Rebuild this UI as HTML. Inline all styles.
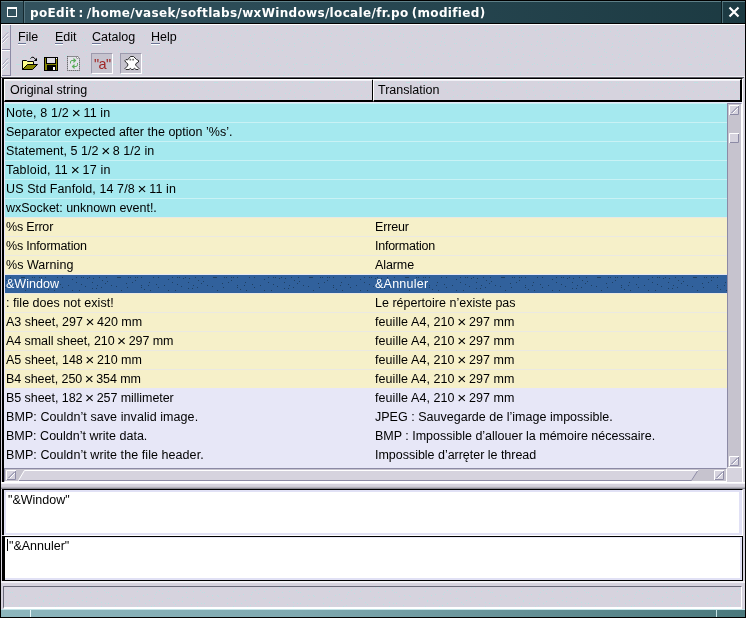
<!DOCTYPE html>
<html><head><meta charset="utf-8"><title>poEdit</title>
<style>
html,body{margin:0;padding:0;}
body{width:746px;height:618px;position:relative;overflow:hidden;background:#d6d3de;font-family:"Liberation Sans",sans-serif;font-size:12.5px;color:#000;}
div,span{position:absolute;box-sizing:border-box;white-space:nowrap;}
#frame{left:0;top:0;width:746px;height:618px;border:1px solid #000;}
#title{left:1px;top:1px;width:744px;height:22px;background:linear-gradient(90deg,#34535f 0%,#2a4a55 40%,#1c3a42 100%);border-top:1px solid #5f8088;}
#tline{left:0;top:23px;width:746px;height:1px;background:#000;}
#ttext{left:30px;top:5px;color:#fff;font:bold 12px "DejaVu Sans","Liberation Sans",sans-serif;line-height:16px;letter-spacing:0.33px;word-spacing:-1.4px;}
.menu{top:29px;font-size:12.5px;line-height:16px;}
.menu u{text-decoration:none;display:inline-block;position:static;height:14px;border-bottom:1px solid #6b7394;box-shadow:0 1px 0 #fff;}
.row{left:5px;width:722px;height:19px;border-top:1px solid #eef;}
.row span{top:2px;line-height:14px;}
.row .o{left:1px;}
.row .t{left:370px;}
.x{font-weight:normal;font-size:15.500px;line-height:0;margin:0 -0.900px;position:relative;top:0.500px;letter-spacing:0}
.c{background:#a5e9ef;border-top-color:#c9f2f5;}
.y{background:#f6f0c9;border-top-color:#ebe9e2;}
.l{background:#e7e7f7;border-top-color:#e7e7f7;}
.s{background:#31619c;color:#fff;border-top-color:#e8e8f0;}
.st{color:#fff;border-top-color:transparent;}
.hdr{top:79px;height:23px;background:#d6d3de;box-shadow:inset 0 1px 0 #f0eff5;border-top:1px solid #fff;border-left:1px solid #fff;border-bottom:2px solid #000;border-right:2px solid #000;}
.ht{top:83px;line-height:14px;}
.tb{top:53px;width:22px;height:21px;background:#c6c3ce;border:1px solid #9c9aad;border-right-color:#fff;border-bottom-color:#fff;}
</style></head><body><div id="wrap" style="left:0;top:0;width:746px;height:618px;will-change:transform">
<svg style="position:absolute;left:0;top:0" width="746" height="618"><defs>
<pattern id="dots" width="96" height="64" patternUnits="userSpaceOnUse"><g fill="#bde0e2"><rect x="0" y="10" width="1" height="1"/><rect x="0" y="45" width="1" height="1"/><rect x="1" y="3" width="1" height="1"/><rect x="1" y="15" width="1" height="1"/><rect x="1" y="22" width="1" height="1"/><rect x="1" y="43" width="1" height="1"/><rect x="2" y="58" width="1" height="1"/><rect x="4" y="6" width="1" height="1"/><rect x="4" y="36" width="1" height="1"/><rect x="5" y="0" width="1" height="1"/><rect x="5" y="26" width="1" height="1"/><rect x="5" y="30" width="1" height="1"/><rect x="6" y="4" width="1" height="1"/><rect x="6" y="43" width="1" height="1"/><rect x="6" y="46" width="1" height="1"/><rect x="6" y="58" width="1" height="1"/><rect x="7" y="31" width="1" height="1"/><rect x="7" y="51" width="1" height="1"/><rect x="8" y="14" width="1" height="1"/><rect x="8" y="63" width="1" height="1"/><rect x="9" y="27" width="1" height="1"/><rect x="10" y="8" width="1" height="1"/><rect x="10" y="16" width="1" height="1"/><rect x="10" y="39" width="1" height="1"/><rect x="12" y="16" width="1" height="1"/><rect x="12" y="27" width="1" height="1"/><rect x="12" y="41" width="1" height="1"/><rect x="13" y="48" width="1" height="1"/><rect x="15" y="9" width="1" height="1"/><rect x="15" y="20" width="1" height="1"/><rect x="15" y="36" width="1" height="1"/><rect x="16" y="0" width="1" height="1"/><rect x="16" y="33" width="1" height="1"/><rect x="17" y="0" width="1" height="1"/><rect x="17" y="57" width="1" height="1"/><rect x="18" y="0" width="1" height="1"/><rect x="19" y="0" width="1" height="1"/><rect x="19" y="29" width="1" height="1"/><rect x="19" y="34" width="1" height="1"/><rect x="19" y="36" width="1" height="1"/><rect x="19" y="42" width="1" height="1"/><rect x="20" y="13" width="1" height="1"/><rect x="20" y="19" width="1" height="1"/><rect x="21" y="23" width="1" height="1"/><rect x="22" y="51" width="1" height="1"/><rect x="23" y="47" width="1" height="1"/><rect x="23" y="57" width="1" height="1"/><rect x="25" y="6" width="1" height="1"/><rect x="25" y="19" width="1" height="1"/><rect x="25" y="42" width="1" height="1"/><rect x="25" y="56" width="1" height="1"/><rect x="26" y="10" width="1" height="1"/><rect x="26" y="20" width="1" height="1"/><rect x="27" y="0" width="1" height="1"/><rect x="27" y="32" width="1" height="1"/><rect x="28" y="35" width="1" height="1"/><rect x="28" y="49" width="1" height="1"/><rect x="28" y="51" width="1" height="1"/><rect x="29" y="0" width="1" height="1"/><rect x="30" y="52" width="1" height="1"/><rect x="30" y="57" width="1" height="1"/><rect x="31" y="5" width="1" height="1"/><rect x="31" y="43" width="1" height="1"/><rect x="32" y="39" width="1" height="1"/><rect x="34" y="0" width="1" height="1"/><rect x="34" y="3" width="1" height="1"/><rect x="34" y="31" width="1" height="1"/><rect x="35" y="22" width="1" height="1"/><rect x="35" y="27" width="1" height="1"/><rect x="35" y="47" width="1" height="1"/><rect x="36" y="0" width="1" height="1"/><rect x="36" y="43" width="1" height="1"/><rect x="36" y="46" width="1" height="1"/><rect x="36" y="54" width="1" height="1"/><rect x="38" y="59" width="1" height="1"/><rect x="39" y="21" width="1" height="1"/><rect x="39" y="35" width="1" height="1"/><rect x="40" y="0" width="1" height="1"/><rect x="40" y="8" width="1" height="1"/><rect x="40" y="10" width="1" height="1"/><rect x="41" y="15" width="1" height="1"/><rect x="41" y="30" width="1" height="1"/><rect x="42" y="36" width="1" height="1"/><rect x="42" y="47" width="1" height="1"/><rect x="42" y="57" width="1" height="1"/><rect x="43" y="12" width="1" height="1"/><rect x="43" y="24" width="1" height="1"/><rect x="43" y="25" width="1" height="1"/><rect x="43" y="33" width="1" height="1"/><rect x="43" y="41" width="1" height="1"/><rect x="43" y="54" width="1" height="1"/><rect x="47" y="8" width="1" height="1"/><rect x="47" y="19" width="1" height="1"/><rect x="47" y="61" width="1" height="1"/><rect x="48" y="5" width="1" height="1"/><rect x="48" y="35" width="1" height="1"/><rect x="48" y="61" width="1" height="1"/><rect x="49" y="13" width="1" height="1"/><rect x="49" y="27" width="1" height="1"/><rect x="49" y="55" width="1" height="1"/><rect x="51" y="18" width="1" height="1"/><rect x="51" y="44" width="1" height="1"/><rect x="51" y="50" width="1" height="1"/><rect x="52" y="0" width="1" height="1"/><rect x="53" y="24" width="1" height="1"/><rect x="54" y="58" width="1" height="1"/><rect x="54" y="63" width="1" height="1"/><rect x="55" y="7" width="1" height="1"/><rect x="55" y="30" width="1" height="1"/><rect x="56" y="45" width="1" height="1"/><rect x="57" y="0" width="1" height="1"/><rect x="57" y="10" width="1" height="1"/><rect x="57" y="41" width="1" height="1"/><rect x="58" y="22" width="1" height="1"/><rect x="58" y="29" width="1" height="1"/><rect x="58" y="35" width="1" height="1"/><rect x="59" y="18" width="1" height="1"/><rect x="59" y="53" width="1" height="1"/><rect x="60" y="16" width="1" height="1"/><rect x="60" y="38" width="1" height="1"/><rect x="60" y="42" width="1" height="1"/><rect x="61" y="45" width="1" height="1"/><rect x="62" y="34" width="1" height="1"/><rect x="63" y="8" width="1" height="1"/><rect x="63" y="14" width="1" height="1"/><rect x="63" y="27" width="1" height="1"/><rect x="64" y="53" width="1" height="1"/><rect x="64" y="60" width="1" height="1"/><rect x="65" y="56" width="1" height="1"/><rect x="66" y="17" width="1" height="1"/><rect x="66" y="25" width="1" height="1"/><rect x="66" y="48" width="1" height="1"/><rect x="66" y="55" width="1" height="1"/><rect x="67" y="2" width="1" height="1"/><rect x="67" y="13" width="1" height="1"/><rect x="70" y="32" width="1" height="1"/><rect x="70" y="39" width="1" height="1"/><rect x="70" y="43" width="1" height="1"/><rect x="71" y="0" width="1" height="1"/><rect x="71" y="5" width="1" height="1"/><rect x="71" y="22" width="1" height="1"/><rect x="72" y="15" width="1" height="1"/><rect x="72" y="43" width="1" height="1"/><rect x="72" y="56" width="1" height="1"/><rect x="73" y="22" width="1" height="1"/><rect x="73" y="51" width="1" height="1"/><rect x="74" y="13" width="1" height="1"/><rect x="75" y="31" width="1" height="1"/><rect x="75" y="62" width="1" height="1"/><rect x="76" y="0" width="1" height="1"/><rect x="76" y="7" width="1" height="1"/><rect x="76" y="48" width="1" height="1"/><rect x="77" y="26" width="1" height="1"/><rect x="77" y="37" width="1" height="1"/><rect x="78" y="0" width="1" height="1"/><rect x="78" y="58" width="1" height="1"/><rect x="79" y="28" width="1" height="1"/><rect x="80" y="9" width="1" height="1"/><rect x="82" y="1" width="1" height="1"/><rect x="82" y="15" width="1" height="1"/><rect x="82" y="24" width="1" height="1"/><rect x="82" y="38" width="1" height="1"/><rect x="82" y="42" width="1" height="1"/><rect x="83" y="32" width="1" height="1"/><rect x="83" y="51" width="1" height="1"/><rect x="84" y="0" width="1" height="1"/><rect x="84" y="40" width="1" height="1"/><rect x="85" y="39" width="1" height="1"/><rect x="85" y="45" width="1" height="1"/><rect x="86" y="21" width="1" height="1"/><rect x="86" y="25" width="1" height="1"/><rect x="86" y="50" width="1" height="1"/><rect x="86" y="56" width="1" height="1"/><rect x="87" y="5" width="1" height="1"/><rect x="87" y="11" width="1" height="1"/><rect x="88" y="1" width="1" height="1"/><rect x="89" y="34" width="1" height="1"/><rect x="90" y="16" width="1" height="1"/><rect x="90" y="50" width="1" height="1"/><rect x="91" y="11" width="1" height="1"/><rect x="91" y="21" width="1" height="1"/><rect x="91" y="45" width="1" height="1"/><rect x="92" y="8" width="1" height="1"/><rect x="92" y="39" width="1" height="1"/><rect x="94" y="0" width="1" height="1"/><rect x="94" y="33" width="1" height="1"/><rect x="94" y="56" width="1" height="1"/><rect x="95" y="28" width="1" height="1"/><rect x="95" y="63" width="1" height="1"/></g></pattern>
<pattern id="ddots" width="96" height="64" patternUnits="userSpaceOnUse"><g fill="#1d3f63"><rect x="0" y="10" width="1" height="1"/><rect x="0" y="45" width="1" height="1"/><rect x="1" y="3" width="1" height="1"/><rect x="1" y="15" width="1" height="1"/><rect x="1" y="22" width="1" height="1"/><rect x="1" y="43" width="1" height="1"/><rect x="2" y="58" width="1" height="1"/><rect x="4" y="6" width="1" height="1"/><rect x="4" y="36" width="1" height="1"/><rect x="5" y="0" width="1" height="1"/><rect x="5" y="26" width="1" height="1"/><rect x="5" y="30" width="1" height="1"/><rect x="6" y="4" width="1" height="1"/><rect x="6" y="43" width="1" height="1"/><rect x="6" y="46" width="1" height="1"/><rect x="6" y="58" width="1" height="1"/><rect x="7" y="31" width="1" height="1"/><rect x="7" y="51" width="1" height="1"/><rect x="8" y="14" width="1" height="1"/><rect x="8" y="63" width="1" height="1"/><rect x="9" y="27" width="1" height="1"/><rect x="10" y="8" width="1" height="1"/><rect x="10" y="16" width="1" height="1"/><rect x="10" y="39" width="1" height="1"/><rect x="12" y="16" width="1" height="1"/><rect x="12" y="27" width="1" height="1"/><rect x="12" y="41" width="1" height="1"/><rect x="13" y="48" width="1" height="1"/><rect x="15" y="9" width="1" height="1"/><rect x="15" y="20" width="1" height="1"/><rect x="15" y="36" width="1" height="1"/><rect x="16" y="0" width="1" height="1"/><rect x="16" y="33" width="1" height="1"/><rect x="17" y="0" width="1" height="1"/><rect x="17" y="57" width="1" height="1"/><rect x="18" y="0" width="1" height="1"/><rect x="19" y="0" width="1" height="1"/><rect x="19" y="29" width="1" height="1"/><rect x="19" y="34" width="1" height="1"/><rect x="19" y="36" width="1" height="1"/><rect x="19" y="42" width="1" height="1"/><rect x="20" y="13" width="1" height="1"/><rect x="20" y="19" width="1" height="1"/><rect x="21" y="23" width="1" height="1"/><rect x="22" y="51" width="1" height="1"/><rect x="23" y="47" width="1" height="1"/><rect x="23" y="57" width="1" height="1"/><rect x="25" y="6" width="1" height="1"/><rect x="25" y="19" width="1" height="1"/><rect x="25" y="42" width="1" height="1"/><rect x="25" y="56" width="1" height="1"/><rect x="26" y="10" width="1" height="1"/><rect x="26" y="20" width="1" height="1"/><rect x="27" y="0" width="1" height="1"/><rect x="27" y="32" width="1" height="1"/><rect x="28" y="35" width="1" height="1"/><rect x="28" y="49" width="1" height="1"/><rect x="28" y="51" width="1" height="1"/><rect x="29" y="0" width="1" height="1"/><rect x="30" y="52" width="1" height="1"/><rect x="30" y="57" width="1" height="1"/><rect x="31" y="5" width="1" height="1"/><rect x="31" y="43" width="1" height="1"/><rect x="32" y="39" width="1" height="1"/><rect x="34" y="0" width="1" height="1"/><rect x="34" y="3" width="1" height="1"/><rect x="34" y="31" width="1" height="1"/><rect x="35" y="22" width="1" height="1"/><rect x="35" y="27" width="1" height="1"/><rect x="35" y="47" width="1" height="1"/><rect x="36" y="0" width="1" height="1"/><rect x="36" y="43" width="1" height="1"/><rect x="36" y="46" width="1" height="1"/><rect x="36" y="54" width="1" height="1"/><rect x="38" y="59" width="1" height="1"/><rect x="39" y="21" width="1" height="1"/><rect x="39" y="35" width="1" height="1"/><rect x="40" y="0" width="1" height="1"/><rect x="40" y="8" width="1" height="1"/><rect x="40" y="10" width="1" height="1"/><rect x="41" y="15" width="1" height="1"/><rect x="41" y="30" width="1" height="1"/><rect x="42" y="36" width="1" height="1"/><rect x="42" y="47" width="1" height="1"/><rect x="42" y="57" width="1" height="1"/><rect x="43" y="12" width="1" height="1"/><rect x="43" y="24" width="1" height="1"/><rect x="43" y="25" width="1" height="1"/><rect x="43" y="33" width="1" height="1"/><rect x="43" y="41" width="1" height="1"/><rect x="43" y="54" width="1" height="1"/><rect x="47" y="8" width="1" height="1"/><rect x="47" y="19" width="1" height="1"/><rect x="47" y="61" width="1" height="1"/><rect x="48" y="5" width="1" height="1"/><rect x="48" y="35" width="1" height="1"/><rect x="48" y="61" width="1" height="1"/><rect x="49" y="13" width="1" height="1"/><rect x="49" y="27" width="1" height="1"/><rect x="49" y="55" width="1" height="1"/><rect x="51" y="18" width="1" height="1"/><rect x="51" y="44" width="1" height="1"/><rect x="51" y="50" width="1" height="1"/><rect x="52" y="0" width="1" height="1"/><rect x="53" y="24" width="1" height="1"/><rect x="54" y="58" width="1" height="1"/><rect x="54" y="63" width="1" height="1"/><rect x="55" y="7" width="1" height="1"/><rect x="55" y="30" width="1" height="1"/><rect x="56" y="45" width="1" height="1"/><rect x="57" y="0" width="1" height="1"/><rect x="57" y="10" width="1" height="1"/><rect x="57" y="41" width="1" height="1"/><rect x="58" y="22" width="1" height="1"/><rect x="58" y="29" width="1" height="1"/><rect x="58" y="35" width="1" height="1"/><rect x="59" y="18" width="1" height="1"/><rect x="59" y="53" width="1" height="1"/><rect x="60" y="16" width="1" height="1"/><rect x="60" y="38" width="1" height="1"/><rect x="60" y="42" width="1" height="1"/><rect x="61" y="45" width="1" height="1"/><rect x="62" y="34" width="1" height="1"/><rect x="63" y="8" width="1" height="1"/><rect x="63" y="14" width="1" height="1"/><rect x="63" y="27" width="1" height="1"/><rect x="64" y="53" width="1" height="1"/><rect x="64" y="60" width="1" height="1"/><rect x="65" y="56" width="1" height="1"/><rect x="66" y="17" width="1" height="1"/><rect x="66" y="25" width="1" height="1"/><rect x="66" y="48" width="1" height="1"/><rect x="66" y="55" width="1" height="1"/><rect x="67" y="2" width="1" height="1"/><rect x="67" y="13" width="1" height="1"/><rect x="70" y="32" width="1" height="1"/><rect x="70" y="39" width="1" height="1"/><rect x="70" y="43" width="1" height="1"/><rect x="71" y="0" width="1" height="1"/><rect x="71" y="5" width="1" height="1"/><rect x="71" y="22" width="1" height="1"/><rect x="72" y="15" width="1" height="1"/><rect x="72" y="43" width="1" height="1"/><rect x="72" y="56" width="1" height="1"/><rect x="73" y="22" width="1" height="1"/><rect x="73" y="51" width="1" height="1"/><rect x="74" y="13" width="1" height="1"/><rect x="75" y="31" width="1" height="1"/><rect x="75" y="62" width="1" height="1"/><rect x="76" y="0" width="1" height="1"/><rect x="76" y="7" width="1" height="1"/><rect x="76" y="48" width="1" height="1"/><rect x="77" y="26" width="1" height="1"/><rect x="77" y="37" width="1" height="1"/><rect x="78" y="0" width="1" height="1"/><rect x="78" y="58" width="1" height="1"/><rect x="79" y="28" width="1" height="1"/><rect x="80" y="9" width="1" height="1"/><rect x="82" y="1" width="1" height="1"/><rect x="82" y="15" width="1" height="1"/><rect x="82" y="24" width="1" height="1"/><rect x="82" y="38" width="1" height="1"/><rect x="82" y="42" width="1" height="1"/><rect x="83" y="32" width="1" height="1"/><rect x="83" y="51" width="1" height="1"/><rect x="84" y="0" width="1" height="1"/><rect x="84" y="40" width="1" height="1"/><rect x="85" y="39" width="1" height="1"/><rect x="85" y="45" width="1" height="1"/><rect x="86" y="21" width="1" height="1"/><rect x="86" y="25" width="1" height="1"/><rect x="86" y="50" width="1" height="1"/><rect x="86" y="56" width="1" height="1"/><rect x="87" y="5" width="1" height="1"/><rect x="87" y="11" width="1" height="1"/><rect x="88" y="1" width="1" height="1"/><rect x="89" y="34" width="1" height="1"/><rect x="90" y="16" width="1" height="1"/><rect x="90" y="50" width="1" height="1"/><rect x="91" y="11" width="1" height="1"/><rect x="91" y="21" width="1" height="1"/><rect x="91" y="45" width="1" height="1"/><rect x="92" y="8" width="1" height="1"/><rect x="92" y="39" width="1" height="1"/><rect x="94" y="0" width="1" height="1"/><rect x="94" y="33" width="1" height="1"/><rect x="94" y="56" width="1" height="1"/><rect x="95" y="28" width="1" height="1"/><rect x="95" y="63" width="1" height="1"/></g></pattern>
</defs>
<rect x="1" y="26" width="744" height="50" fill="url(#dots)"/>
<rect x="4" y="587" width="737" height="20" fill="url(#dots)"/>
</svg>
<div id="title"></div>
<div style="left:23px;top:1px;width:1px;height:22px;background:#14282e"></div>
<div style="left:24px;top:2px;width:1px;height:21px;background:#55747f"></div>
<div style="left:721px;top:1px;width:1px;height:22px;background:#0c1c20"></div>
<div style="left:722px;top:2px;width:1px;height:21px;background:#4f7078"></div>
<div id="tline"></div>
<svg style="position:absolute;left:0;top:0" width="746" height="24" viewBox="0 0 746 24">
<rect x="7.5" y="8" width="9" height="8.5" fill="none" stroke="#fff" stroke-width="1"/>
<rect x="7" y="7" width="10" height="2" fill="#fff"/>
<path d="M729.5 7.5 L738.5 16.5 M738.5 7.5 L729.5 16.5" stroke="#fff" stroke-width="2.2" fill="none"/>
</svg>
<div id="ttext">poEdit : /home/vasek/softlabs/wxWindows/locale/fr.po (modified)</div>

<!-- menubar -->
<div style="left:1px;top:24px;width:744px;height:1px;background:#fff"></div>
<div style="left:1px;top:24px;width:1px;height:53px;background:#fff"></div>
<div style="left:10px;top:25px;width:1px;height:51px;background:#8c8aa5"></div>
<div style="left:2px;top:49px;width:8px;height:1px;background:#8c8aa5"></div>
<div style="left:1px;top:50px;width:9px;height:1px;background:#fff"></div>
<div style="left:2px;top:75px;width:9px;height:1px;background:#8c8aa5"></div>
<div style="left:1px;top:76px;width:744px;height:1px;background:#eeedf3"></div>
<svg style="position:absolute;left:0;top:24px" width="12" height="54" viewBox="0 0 12 54">
<path d="M2.5 14.5 L8 8.5 M2.5 18.5 L8 12.5" stroke="#8c8aa5" stroke-width="1" fill="none"/>
<path d="M2.5 15.5 L8 9.5 M2.5 19.5 L8 13.5" stroke="#fff" stroke-width="1" fill="none"/>
<path d="M2.5 40.5 L8 34.5 M2.5 44.5 L8 38.5" stroke="#8c8aa5" stroke-width="1" fill="none"/>
<path d="M2.5 41.5 L8 35.5 M2.5 45.5 L8 39.5" stroke="#fff" stroke-width="1" fill="none"/>
</svg>
<div class="menu" style="left:18px"><u>F</u>ile</div>
<div class="menu" style="left:55px"><u>E</u>dit</div>
<div class="menu" style="left:92px"><u>C</u>atalog</div>
<div class="menu" style="left:151px"><u>H</u>elp</div>

<!-- toolbar -->
<div class="tb" style="left:91px"></div>
<div class="tb" style="left:120px"></div>
<div style="left:94px;top:55.500px;color:#a02626;font-size:14.500px;line-height:16px;letter-spacing:-0.600px">"a"</div>
<svg style="position:absolute;left:18px;top:52px" width="130" height="24" viewBox="18 52 130 24">
<!-- open -->
<path d="M22.5 69.5 V60.500 H26.500 L27.500 61.500 H33.500 V64.500 H27.500 Z" fill="#ffff8c" stroke="#000"/>
<path d="M22.5 69.500 L27.500 64.500 H37.500 L32.500 69.500 Z" fill="#848400" stroke="#000"/>
<path d="M30.500 58.500 Q33 55.300 35.500 59.500" fill="none" stroke="#000"/>
<path d="M37 57.800 V61 H33.800 Z" fill="#000"/>
<!-- save -->
<rect x="44.500" y="57.500" width="13" height="13" fill="#848400" stroke="#000"/>
<rect x="46.500" y="57.500" width="9" height="6" fill="#dedce4" stroke="#000"/>
<rect x="47" y="65" width="9" height="5" fill="#000"/>
<rect x="53" y="67" width="2" height="3" fill="#fff"/>
<rect x="56" y="58" width="1" height="1" fill="#fff"/>
<!-- update -->
<path d="M67.500 56.500 H77.500 L79.500 58.500 V70.500 H67.500 Z" fill="#e4e3ea" stroke="#3a3a3a" stroke-dasharray="1 1"/>
<circle cx="77.500" cy="57.500" r="1" fill="#fff" stroke="#555" stroke-width="0.600"/>
<path d="M70.500 63.500 V62 Q70.500 60.500 72 60.500 H74" fill="none" stroke="#5aad5a" stroke-width="1"/>
<path d="M73.500 57.800 L76.300 60.500 L73.500 63.200 Z" fill="#5aad5a"/>
<path d="M77.500 63 V64.500 Q77.500 66.500 76 66.500 H74" fill="none" stroke="#5aad5a" stroke-width="1"/>
<path d="M74.500 63.800 L71.700 66.500 L74.500 69.200 Z" fill="#5aad5a"/>
<!-- ghost -->
<path d="M130.500 56.500 H133.500 L136.500 59.500 L138.500 60.500 L138.500 62 L136 63.500 L135.500 65 L137 66.500 L139 68.500 L138 69.500 L136 69.500 L134.500 68.300 L133 69.500 L131.500 69.500 L130.500 68.300 L129 69.500 L126 69.500 L125 68.500 L127 66.500 L128 65 L127.500 63.500 L125.500 62 L125 60.500 L126 59.500 L127.500 60 Z" fill="#fff" stroke="#000" stroke-width="0.800" stroke-linejoin="round"/>
<rect x="129.500" y="58.800" width="1.700" height="1.700" fill="#666"/><rect x="132.300" y="58.800" width="1.700" height="1.700" fill="#666"/>
</svg>

<!-- list frame -->
<div style="left:1px;top:77px;width:743px;height:1px;background:#5a5a63"></div>
<div style="left:2px;top:78px;width:741px;height:406px;border-top:1px solid #000;border-left:2px solid #000;border-right:1px solid #fff;border-bottom:1px solid #fff;background:#e7e7f7"></div>
<div class="hdr" style="left:4px;width:370px"></div>
<div class="hdr" style="left:373px;width:369px"></div>
<svg style="position:absolute;left:6px;top:82px" width="734" height="17"><rect width="364" height="17" fill="url(#dots)"/><rect x="370" width="364" height="17" fill="url(#dots)"/></svg>
<div class="ht" style="left:10px">Original string</div>
<div class="ht" style="left:378px">Translation</div>
<div style="left:4px;top:102px;width:738px;height:1px;background:#e7e7f7"></div>
<div class="row c" style="top:103px"><span class="o" style="letter-spacing:0.158px">Note, 8 1/2 <b class="x">×</b> 11 in</span><span class="t" style="letter-spacing:0.000px"></span></div>
<div class="row c" style="top:122px"><span class="o" style="letter-spacing:0.017px">Separator expected after the option ’%s’.</span><span class="t" style="letter-spacing:0.000px"></span></div>
<div class="row c" style="top:141px"><span class="o" style="letter-spacing:0.048px">Statement, 5 1/2 <b class="x">×</b> 8 1/2 in</span><span class="t" style="letter-spacing:0.000px"></span></div>
<div class="row c" style="top:160px"><span class="o" style="letter-spacing:0.211px">Tabloid, 11 <b class="x">×</b> 17 in</span><span class="t" style="letter-spacing:0.000px"></span></div>
<div class="row c" style="top:179px"><span class="o" style="letter-spacing:0.107px">US Std Fanfold, 14 7/8 <b class="x">×</b> 11 in</span><span class="t" style="letter-spacing:0.000px"></span></div>
<div class="row c" style="top:198px"><span class="o" style="letter-spacing:-0.028px">wxSocket: unknown event!.</span><span class="t" style="letter-spacing:0.000px"></span></div>
<div class="row y" style="top:217px"><span class="o" style="letter-spacing:-0.188px">%s Error</span><span class="t" style="letter-spacing:-0.167px">Erreur</span></div>
<div class="row y" style="top:236px"><span class="o" style="letter-spacing:-0.186px">%s Information</span><span class="t" style="letter-spacing:-0.245px">Information</span></div>
<div class="row y" style="top:255px"><span class="o" style="letter-spacing:0.050px">%s Warning</span><span class="t" style="letter-spacing:-0.100px">Alarme</span></div>
<div class="row s" style="top:274px"></div>
<svg style="position:absolute;left:5px;top:277px" width="722" height="14"><rect width="722" height="14" fill="url(#ddots)"/></svg>
<div class="row st" style="top:274px"><span class="o" style="letter-spacing:0.029px">&amp;Window</span><span class="t" style="letter-spacing:0.237px">&amp;Annuler</span></div>
<div class="row y" style="top:293px"><span class="o" style="letter-spacing:0.032px">: file does not exist!</span><span class="t" style="letter-spacing:0.008px">Le répertoire n’existe pas</span></div>
<div class="row y" style="top:312px"><span class="o" style="letter-spacing:-0.018px">A3 sheet, 297 <b class="x">×</b> 420 mm</span><span class="t" style="letter-spacing:0.067px">feuille A4, 210 <b class="x">×</b> 297 mm</span></div>
<div class="row y" style="top:331px"><span class="o" style="letter-spacing:-0.064px">A4 small sheet, 210 <b class="x">×</b> 297 mm</span><span class="t" style="letter-spacing:0.067px">feuille A4, 210 <b class="x">×</b> 297 mm</span></div>
<div class="row y" style="top:350px"><span class="o" style="letter-spacing:-0.032px">A5 sheet, 148 <b class="x">×</b> 210 mm</span><span class="t" style="letter-spacing:0.067px">feuille A4, 210 <b class="x">×</b> 297 mm</span></div>
<div class="row y" style="top:369px"><span class="o" style="letter-spacing:-0.077px">B4 sheet, 250 <b class="x">×</b> 354 mm</span><span class="t" style="letter-spacing:0.067px">feuille A4, 210 <b class="x">×</b> 297 mm</span></div>
<div class="row l" style="top:388px"><span class="o" style="letter-spacing:-0.050px">B5 sheet, 182 <b class="x">×</b> 257 millimeter</span><span class="t" style="letter-spacing:0.067px">feuille A4, 210 <b class="x">×</b> 297 mm</span></div>
<div class="row l" style="top:407px"><span class="o" style="letter-spacing:0.076px">BMP: Couldn’t save invalid image.</span><span class="t" style="letter-spacing:0.018px">JPEG : Sauvegarde de l’image impossible.</span></div>
<div class="row l" style="top:426px"><span class="o" style="letter-spacing:0.012px">BMP: Couldn’t write data.</span><span class="t" style="letter-spacing:-0.006px">BMP : Impossible d’allouer la mémoire nécessaire.</span></div>
<div class="row l" style="top:445px"><span class="o" style="letter-spacing:0.069px">BMP: Couldn’t write the file header.</span><span class="t" style="letter-spacing:-0.023px">Impossible d’arręter le thread</span></div>
<!-- vscroll -->
<div style="left:727px;top:103px;width:15px;height:365px;background:#c6c3ce;border-left:1px solid #8c8aa5;border-top:1px solid #8c8aa5;border-right:1px solid #fff;border-bottom:1px solid #fff"></div>
<div style="left:4px;top:468px;width:738px;height:14px;background:#d6d3de;"></div>
<div style="left:4px;top:468px;width:723px;height:14px;background:#c6c3ce;border-top:1px solid #8c8aa5;border-left:1px solid #8c8aa5;border-bottom:1px solid #fff;border-right:1px solid #fff"></div>
<svg style="position:absolute;left:0;top:100px" width="746" height="384" viewBox="0 100 746 384">
<g id="btn">
<rect x="729" y="105" width="10" height="10" fill="#d6d3de"/>
<path d="M729.5 115 V105.500 H739" stroke="#fff" fill="none"/>
<path d="M730 114.500 H738.500 V106" stroke="#8c8aa5" fill="none"/>
<path d="M731.500 113 L737.500 107" stroke="#7b7b9c" fill="none"/>
<path d="M732.500 113.500 L738 108" stroke="#fff" fill="none"/>
</g>
<use href="#btn" y="351"/>
<use href="#btn" x="-723" y="365"/>
<use href="#btn" x="-15" y="365"/>
<rect x="729" y="133" width="10" height="10" fill="#d6d3de"/>
<path d="M729.500 143 V133.500 H739" stroke="#fff" fill="none"/>
<path d="M730 142.500 H738.500 V134" stroke="#8c8aa5" fill="none"/>
<path d="M18 481 L24 470 H698 L692 481 Z" fill="#d6d3de"/>
<path d="M18.500 480.500 L24.500 470.500 H698" stroke="#fff" fill="none"/>
<path d="M19 480.500 H691.500 L697.500 471" stroke="#8c8aa5" fill="none"/>
</svg>
<!-- text boxes -->
<div style="left:1px;top:482px;width:744px;height:1px;background:#fff"></div>
<div style="left:1px;top:483px;width:744px;height:1px;background:#f2f1f6"></div>
<div style="left:1px;top:486px;width:744px;height:1px;background:#cfcdd6"></div>
<div style="left:1px;top:487px;width:744px;height:1px;background:#b5b3bd"></div>
<div style="left:1px;top:488px;width:744px;height:1px;background:#8a8992"></div>
<div style="left:2px;top:489px;width:741px;height:46px;border-top:1px solid #000;border-left:2px solid #000;border-right:1px solid #fff;border-bottom:0;background:#fff;box-shadow:inset 2px 2px 0 #e1e1f5, inset -3px -2px 0 #e1e1f5"></div>
<div style="left:4px;top:535px;width:739px;height:1px;background:#fff"></div>
<div style="left:8px;top:493px;line-height:14px">"&amp;Window"</div>
<div style="left:2px;top:536px;width:741px;height:45px;border:1px solid #000;border-left-width:3px;background:#fff;box-shadow:inset 0 1px 0 #ececfa, inset -2px -2px 0 #e1e1f5"></div>
<div style="left:7px;top:539px;width:1px;height:12px;background:#000"></div>
<div style="left:9px;top:539px;line-height:14px">"&amp;Annuler"</div>
<div style="left:1px;top:581px;width:744px;height:2px;background:#f2f1f6"></div>

<!-- status -->
<div style="left:3px;top:586px;width:739px;height:23px;border-top:1px solid #6b6b7b;border-left:1px solid #6b6b7b;border-right:1px solid #fff;border-bottom:2px solid #fff;"></div>
<!-- bottom frame -->
<div style="left:1px;top:609px;width:744px;height:8px;background:linear-gradient(90deg,#8db6bd 0%,#7fa9b0 40%,#4a787c 100%);border-top:1px solid #c4e4e8"></div>
<div style="left:30px;top:610px;width:1px;height:7px;background:#e8f6f8"></div>
<div style="left:716px;top:610px;width:1px;height:7px;background:#c8e4e6"></div>
<div id="frame"></div>
</div></body></html>
